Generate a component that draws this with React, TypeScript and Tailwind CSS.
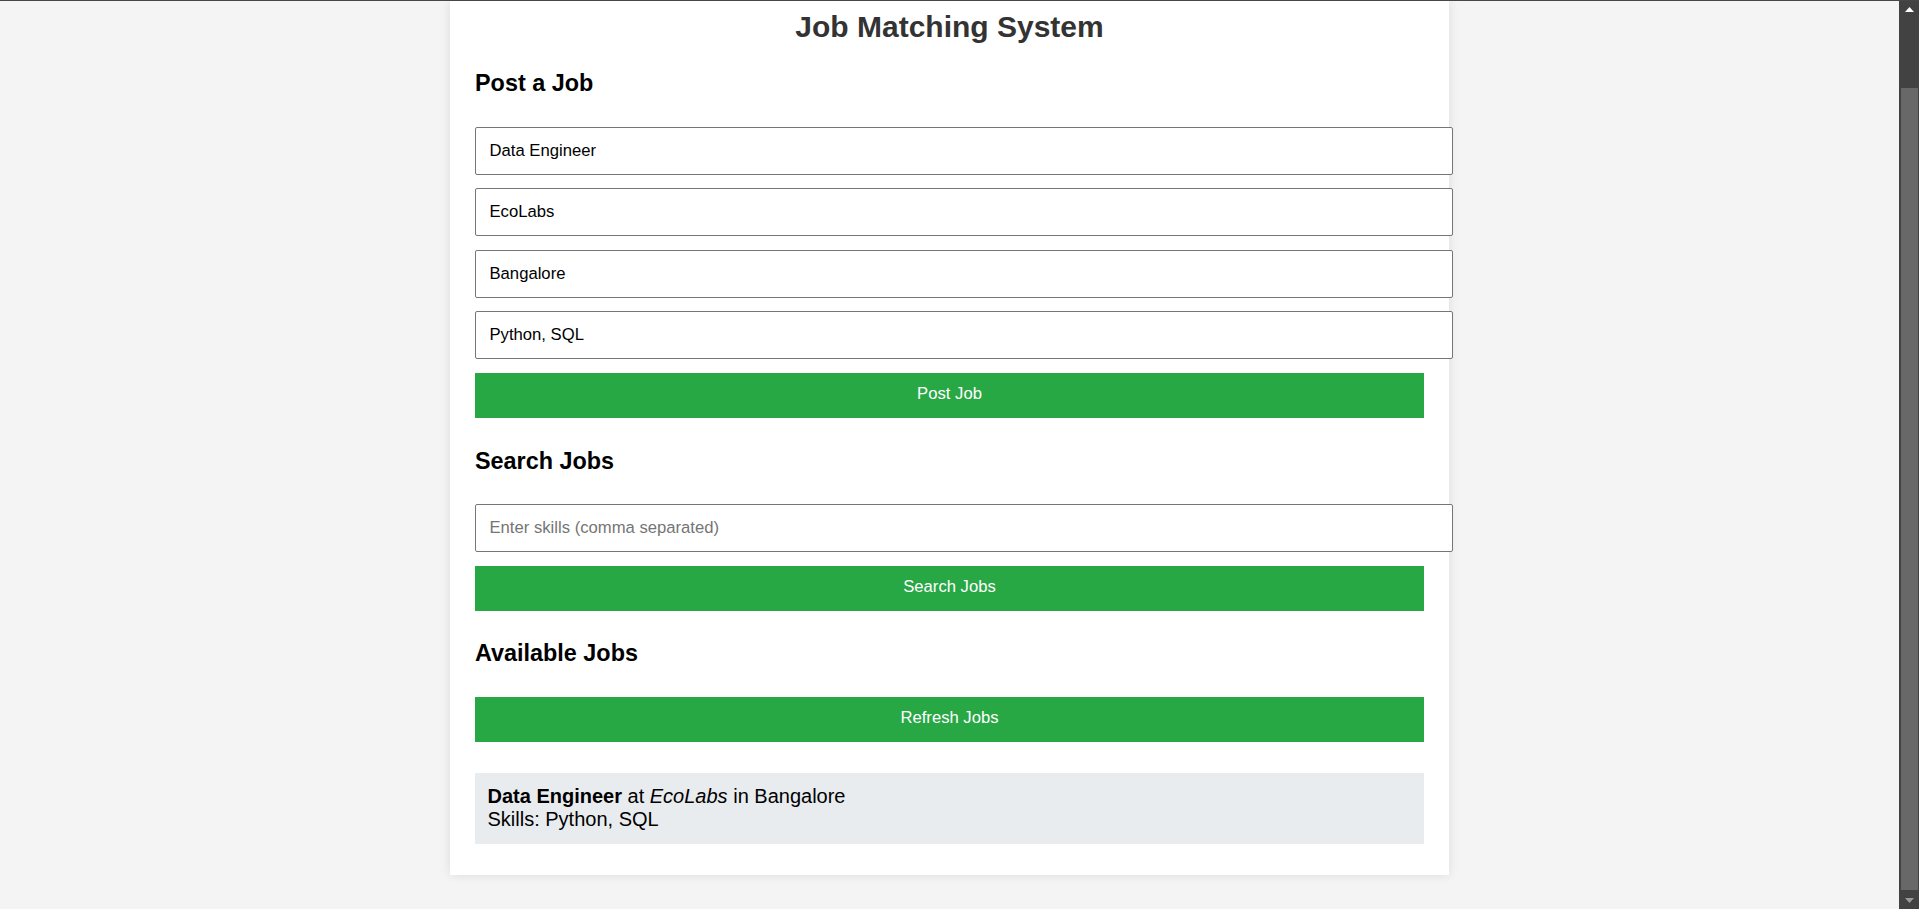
import React from "react";

const inputCls =
  "block w-[978px] h-[48px] shrink-0 rounded-[2px] border border-[#767676] bg-white pl-[13.5px] pr-[12.5px] text-[16.67px] text-black placeholder:text-[#757575] outline-none";

const btnCls =
  "block w-full h-[45px] shrink-0 bg-[#28a745] pt-0 pb-[4px] text-center text-[16.67px] leading-[19px] text-white";

const h3Cls = "text-[23.4px] leading-[27px] font-bold text-black";

export default function App() {
  return (
    <div className="flex h-[909px] w-full flex-col overflow-hidden bg-[#f4f4f4] font-['Liberation_Sans',Arial,sans-serif]">
      <div className="h-px w-full shrink-0 bg-[#474747]" />
      <div className="flex min-h-0 flex-1">
        <main className="min-w-0 flex-1 overflow-hidden">
          <div className="mx-auto flex w-[999px] flex-col bg-white px-[25px] pt-[9px] pb-[31px] shadow-[0_0_10px_rgba(0,0,0,0.1)]">
            <h1 className="text-center text-[30px] leading-[34px] font-bold text-[#333]">
              Job Matching System
            </h1>

            <h3 className={`${h3Cls} mt-[26px]`}>Post a Job</h3>
            <input className={`${inputCls} mt-[30px]`} defaultValue="Data Engineer" />
            <input className={`${inputCls} mt-[13.33px]`} defaultValue="EcoLabs" />
            <input className={`${inputCls} mt-[13.33px]`} defaultValue="Bangalore" />
            <input className={`${inputCls} mt-[13.33px]`} defaultValue="Python, SQL" />
            <button className={`${btnCls} mt-[14px]`}>Post Job</button>

            <h3 className={`${h3Cls} mt-[30px]`}>Search Jobs</h3>
            <input
              className={`${inputCls} mt-[29px]`}
              placeholder="Enter skills (comma separated)"
            />
            <button className={`${btnCls} mt-[14px]`}>Search Jobs</button>

            <h3 className={`${h3Cls} mt-[29px]`}>Available Jobs</h3>
            <button className={`${btnCls} mt-[30px]`}>Refresh Jobs</button>

            <div className="mt-[31px] bg-[#e9ecef] p-[12.5px] text-[20px] leading-[23px] text-black">
              <strong>Data Engineer</strong> at <em>EcoLabs</em> in Bangalore
              <br />
              Skills: Python, SQL
            </div>
          </div>
        </main>

        <div className="flex w-[20px] shrink-0 flex-col bg-[#424242]">
          <div className="flex h-[17px] shrink-0 items-center justify-center">
            <svg width="9" height="5" viewBox="0 0 9 5">
              <polygon points="0,5 4.5,0 9,5" fill="#ffffff" />
            </svg>
          </div>
          <div className="flex min-h-0 flex-1 flex-col pt-[70px] pb-[2px]">
            <div className="ml-[2px] mr-[1px] flex-1 bg-[#686868]" />
          </div>
          <div className="flex h-[17px] shrink-0 items-center justify-center">
            <svg width="9" height="5" viewBox="0 0 9 5">
              <polygon points="0,0 9,0 4.5,5" fill="#9a9a9a" />
            </svg>
          </div>
        </div>
      </div>
    </div>
  );
}
